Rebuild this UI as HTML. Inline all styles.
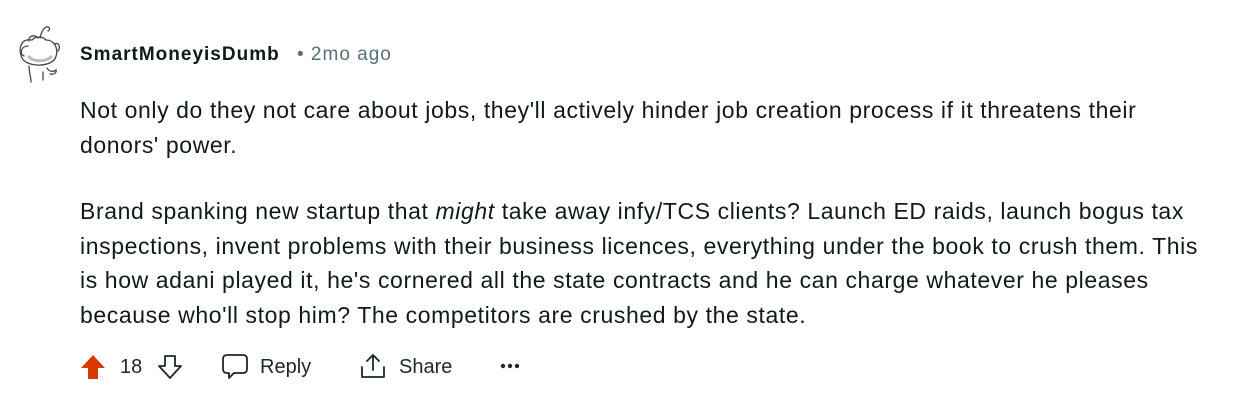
<!DOCTYPE html>
<html><head><meta charset="utf-8"><style>
body{margin:0;background:#fff;width:1254px;height:407px;overflow:hidden;font-family:"Liberation Sans",sans-serif;color:#0f1a1c;position:relative}
.abs{position:absolute;white-space:nowrap}
.p{position:absolute;left:80px;font-size:23px;letter-spacing:0.6px;line-height:34.5px;color:#0f1a1c;white-space:nowrap}
.act{position:absolute;top:354px;font-size:20px;color:#1a282d;line-height:26px}
</style></head><body>
<svg class="abs" style="left:16px;top:24px" width="46" height="60" viewBox="0 0 46 60" fill="none" stroke="#444" stroke-width="1.3" stroke-linecap="round">
<path d="M24 14 C25 8 27 5 30 3 M30 3 c3 -1 5 2 2 4 M22 14 c-4 -4 -10 -2 -9 3"/>
<path d="M16 16 C4 14 2 26 6 34 C10 42 30 44 38 36 C44 28 40 16 30 16 C26 12 20 12 16 16Z"/>
<path d="M12 22 c-7 0 -9 8 -4 10 M38 20 c5 -2 7 3 4 7"/>
<path d="M13 42 c0 6 2 11 2 16 M31 44 c2 4 7 4 9 2 c1 3 -3 5 -6 4 M27 48 v8"/>
<path d="M13 33 c5 5 16 5 22 0" stroke="#bbb" stroke-width="3"/>
</svg>
<div class="abs" style="left:80px;top:44px;font-size:19px;letter-spacing:1px;font-weight:bold;color:#0f1a1c">SmartMoneyisDumb</div>
<div class="abs" style="left:297px;top:44px;font-size:19px;letter-spacing:1px;color:#576f76">• 2mo ago</div>
<div class="p" style="top:93px">Not only do they not care about jobs, they'll actively hinder job creation process if it threatens their<br>donors' power.</div>
<div class="p" style="top:194px">Brand spanking new startup that <i>might</i> take away infy/TCS clients? Launch ED raids, launch bogus tax<br>inspections, invent problems with their business licences, everything under the book to crush them. This<br>is how adani played it, he's cornered all the state contracts and he can charge whatever he pleases<br>because who'll stop him? The competitors are crushed by the state.</div>
<svg class="abs" style="left:80px;top:354px" width="26" height="26" viewBox="0 0 26 26"><path d="M13 1 L25 14 H18 V25 H8 V14 H1 Z" fill="#d93900"/></svg>
<div class="act" style="left:120px">18</div>
<svg class="abs" style="left:157px;top:354px" width="26" height="26" viewBox="0 0 26 26" fill="none" stroke="#1a282d" stroke-width="1.8" stroke-linejoin="round"><path d="M13 24 L24 12 H18 V2 H8 V12 H2 Z"/></svg>
<svg class="abs" style="left:221px;top:353px" width="28" height="28" viewBox="0 0 28 28" fill="none" stroke="#1a282d" stroke-width="1.8" stroke-linejoin="round"><path d="M6 2 H22 Q26 2 26 6 V16 Q26 20 22 20 H13 L8 25 V20 H6 Q2 20 2 16 V6 Q2 2 6 2Z"/></svg>
<div class="act" style="left:260px">Reply</div>
<svg class="abs" style="left:359px;top:352px" width="28" height="28" viewBox="0 0 28 28" fill="none" stroke="#1a282d" stroke-width="1.8" stroke-linejoin="round" stroke-linecap="round"><path d="M14 3 V18 M8 9 L14 3 L20 9 M3 15 V25 H25 V15"/></svg>
<div class="act" style="left:399px">Share</div>
<svg class="abs" style="left:500px;top:362px" width="20" height="8" viewBox="0 0 20 8" fill="#1a282d"><circle cx="3" cy="4" r="2.2"/><circle cx="10" cy="4" r="2.2"/><circle cx="17" cy="4" r="2.2"/></svg>
</body></html>
